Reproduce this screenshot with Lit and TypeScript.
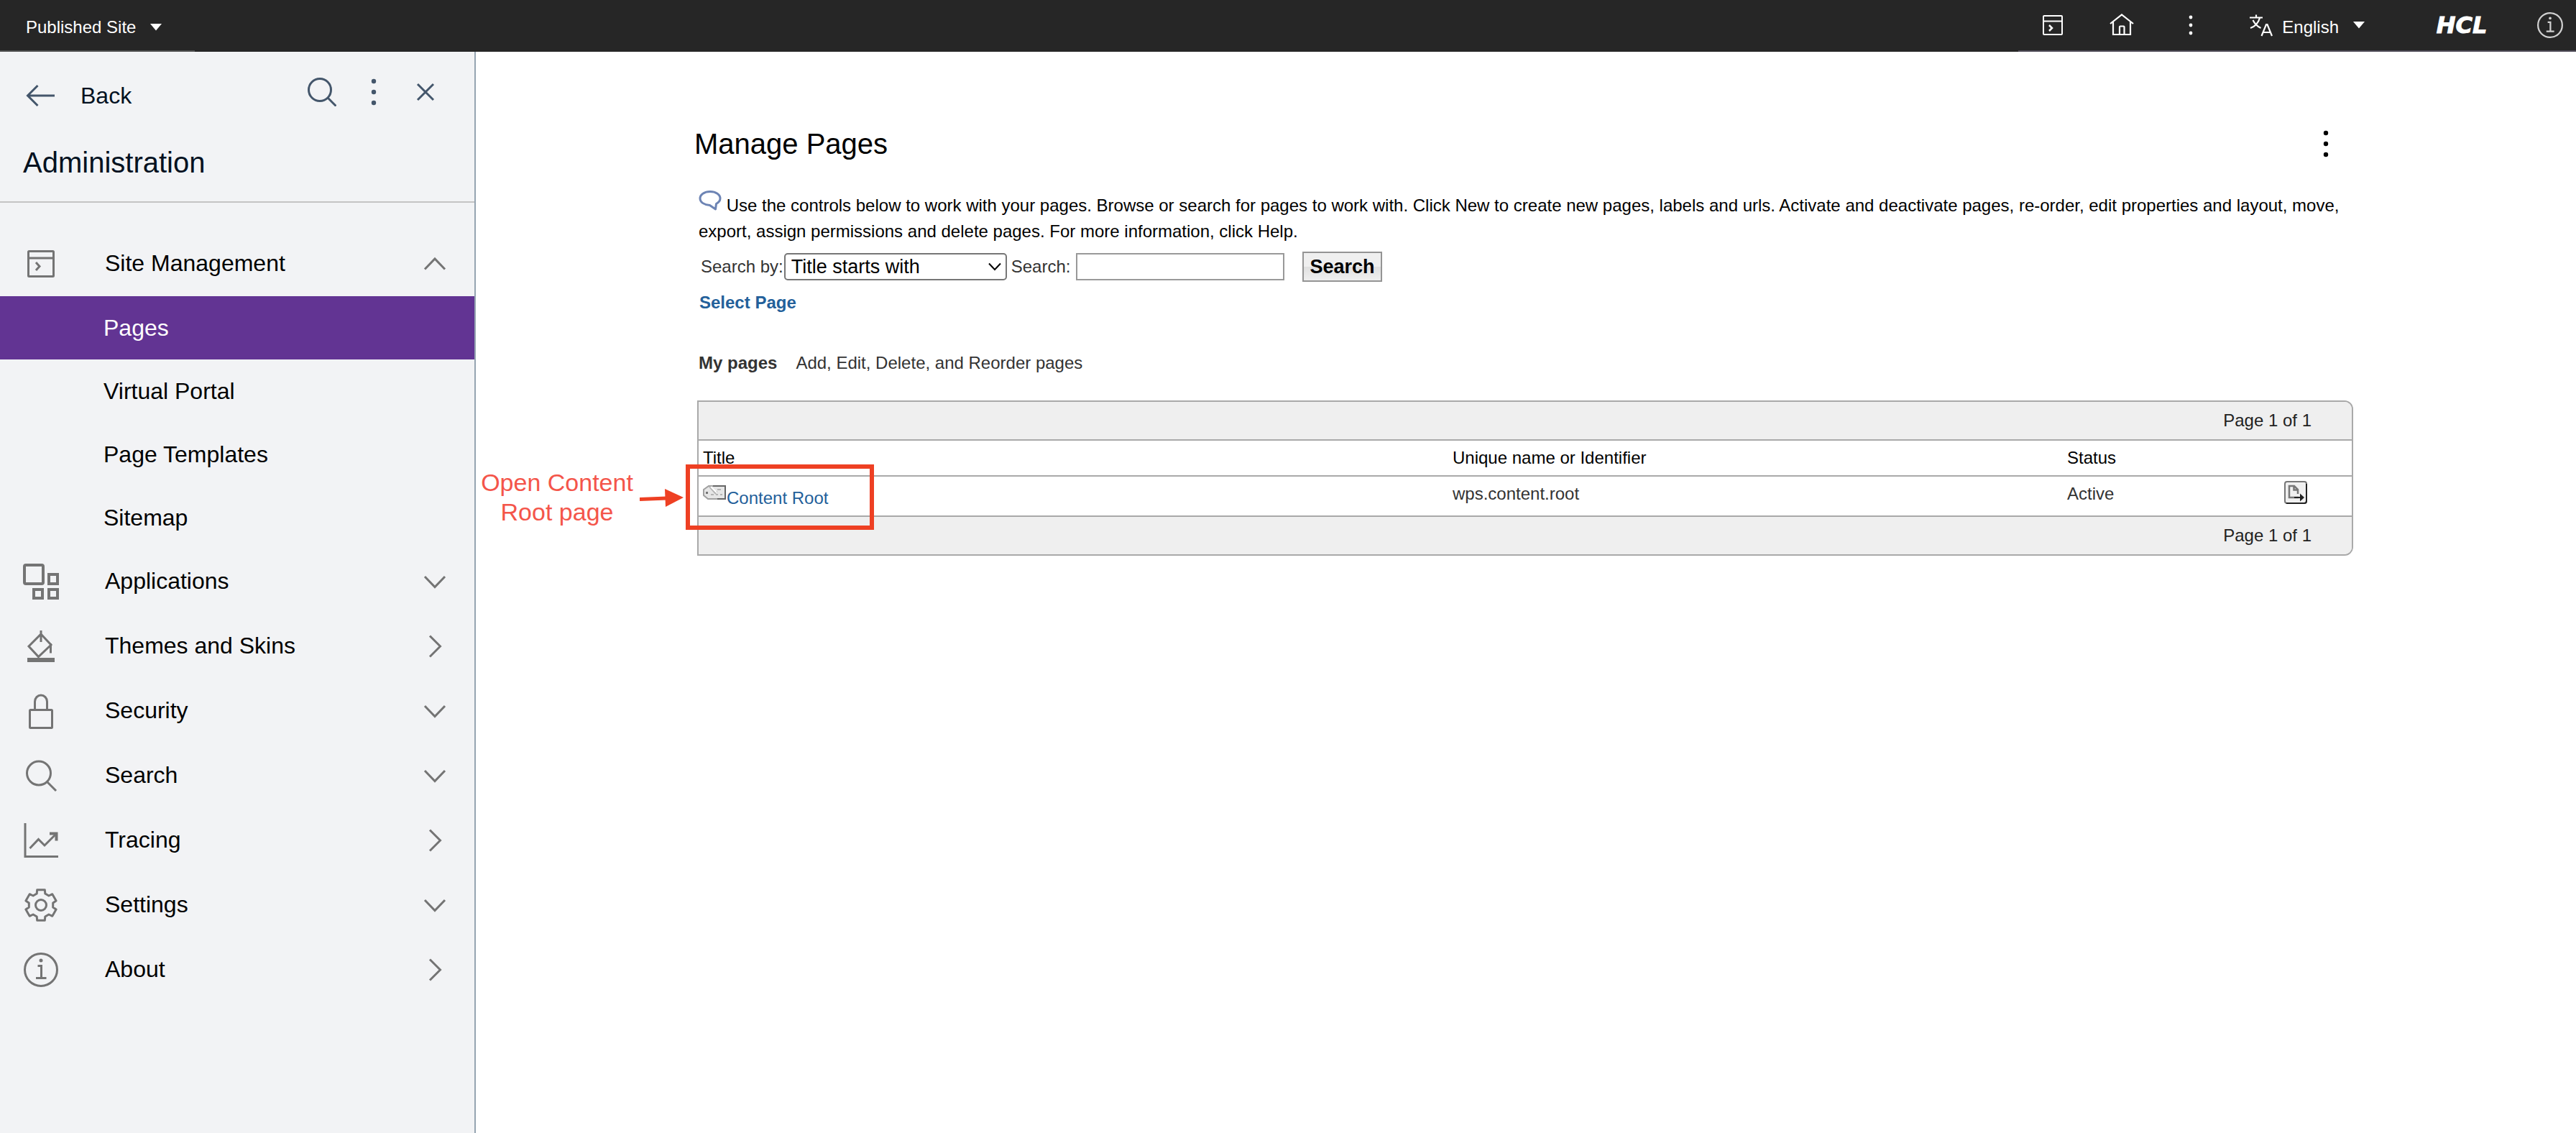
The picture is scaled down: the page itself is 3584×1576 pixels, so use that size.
import { LitElement, html, css, svg, nothing } from "lit";
import type { SVGTemplateResult } from "lit";
import { customElement, state } from "lit/decorators.js";
import { classMap } from "lit/directives/class-map.js";

interface NavSection {
  label: string;
  icon: string;
  arrow: "up" | "down" | "right";
  pages?: string[];
}

const SECTIONS: NavSection[] = [
  {
    label: "Site Management",
    icon: "site",
    arrow: "up",
    pages: ["Pages", "Virtual Portal", "Page Templates", "Sitemap"],
  },
  { label: "Applications", icon: "apps", arrow: "down" },
  { label: "Themes and Skins", icon: "paint", arrow: "right" },
  { label: "Security", icon: "lock", arrow: "down" },
  { label: "Search", icon: "search", arrow: "down" },
  { label: "Tracing", icon: "trace", arrow: "right" },
  { label: "Settings", icon: "gear", arrow: "down" },
  { label: "About", icon: "info", arrow: "right" },
];

/** Outline of a six-toothed gear centred on (24, 24). */
function gearPath(): string {
  const corners: Array<[number, number]> = [
    [-20, 17],
    [-14, 22],
    [14, 22],
    [20, 17],
  ];
  const points: string[] = [];
  for (let tooth = 0; tooth < 6; tooth++) {
    for (const [offset, radius] of corners) {
      const angle = ((tooth * 60 + offset - 90) * Math.PI) / 180;
      const x = 24 + radius * Math.cos(angle);
      const y = 24 + radius * Math.sin(angle);
      points.push(`${x.toFixed(1)} ${y.toFixed(1)}`);
    }
  }
  return `M${points.join("L")}Z`;
}

const ICONS: Record<string, SVGTemplateResult> = {
  site: svg`<g stroke-width="3"><rect x="6.500" y="6.500" width="35" height="35" rx="1"/><path d="M6 16H42M17 22l5 5.500-5 5.500"/></g>`,
  apps: svg`<g stroke-width="4"><rect x="1" y="1" width="26" height="26" rx="2"/><rect x="35" y="14" width="12" height="13"/><rect x="14" y="35" width="12" height="12"/><rect x="35" y="35" width="12" height="12"/></g>`,
  paint: svg`<path stroke-width="3" d="M24 2V18M24 7L38 22 20.500 38.500 7 24ZM37.500 20V33.500"/><path stroke-width="6" d="M5 43H43"/>`,
  lock: svg`<g stroke-width="3"><rect x="8.500" y="22.500" width="31" height="25" rx="1"/><path d="M15.500 22V11a8.500 9 0 0 1 17 0V22"/></g>`,
  search: svg`<g stroke-width="3"><circle cx="21" cy="20.500" r="16.500"/><path d="M32.500 32.500L45 45"/></g>`,
  trace: svg`<path stroke-width="3" d="M2 0V46.500H48M8.500 35L20.500 22.500 29 31 45.500 14.500"/><path stroke-width="4" stroke-linejoin="miter" d="M36 14.500H45.500V24.500"/>`,
  gear: svg`<g stroke-width="3"><path stroke-linejoin="round" d=${gearPath()}/><circle cx="24" cy="24" r="7.500"/></g>`,
  info: svg`<g stroke-width="3"><circle cx="24" cy="24" r="22.500"/><path d="M19.500 18.500H24.500V35.500M17 35.500H31.500"/></g><circle cx="24" cy="11" r="2.500" fill="currentColor" stroke="none"/>`,
};

const ARROWS: Record<string, string> = {
  up: "M1 22.500L15 8L29 22.500",
  down: "M1 8L15 22.500L29 8",
  right: "M8 0.500L22.500 15L8 29.500",
};

const dots = (radius: number, step: number) => svg`
  <circle cx="20" cy=${20 - step} r=${radius} fill="currentColor" stroke="none"/>
  <circle cx="20" cy="20" r=${radius} fill="currentColor" stroke="none"/>
  <circle cx="20" cy=${20 + step} r=${radius} fill="currentColor" stroke="none"/>`;

const reset = css`
  :host {
    display: block;
    box-sizing: border-box;
    font-family: "Liberation Sans", Arial, Helvetica, sans-serif;
  }
  * {
    box-sizing: border-box;
  }
  svg {
    display: block;
    flex: none;
    fill: none;
    stroke: currentColor;
  }
  button {
    display: flex;
    align-items: center;
    margin: 0;
    padding: 0;
    border: 0;
    background: none;
    color: inherit;
    font: inherit;
    text-align: left;
    cursor: pointer;
  }
  a {
    color: inherit;
    text-decoration: none;
  }
  h1,
  h2,
  p {
    margin: 0;
    font-weight: 400;
  }
`;

@customElement("portal-toolbar")
export class PortalToolbar extends LitElement {
  static styles = [
    reset,
    css`
      .bar {
        display: flex;
        justify-content: space-between;
        height: 72px;
        background: #262626;
        color: #fff;
        font-size: 24px;
        line-height: 28px;
      }
      .site,
      .tools {
        display: flex;
        align-items: center;
        border-bottom: 2px solid #4f4b57;
      }
      .site {
        padding: 6px 46px 0 36px;
        gap: 20px;
        border-color: #505050;
      }
      .tools {
        padding: 0 18px 0 30px;
      }
      .group {
        display: flex;
        gap: 60px;
        margin-right: 64px;
      }
      .square {
        width: 36px;
        height: 36px;
        justify-content: center;
      }
      .language {
        margin-right: 72px;
      }
      .language-name {
        padding: 6px 20px 0 13px;
      }
      .brand {
        display: flex;
        justify-content: center;
        width: 126px;
        margin-right: 42px;
        font: italic 700 32px/36px "DejaVu Sans", sans-serif;
        -webkit-text-stroke: 1px #fff;
      }
      .info {
        color: #d0d0d0;
      }
    `,
  ];

  render() {
    return html`
      <header class="bar">
        <button class="site">
          Published Site
          <svg width="16" height="10" viewBox="0 0 16 10"><path fill="#fff" stroke="none" d="M0 0H16L8 9.500Z" /></svg>
        </button>
        <div class="tools">
          <div class="group">
            <button class="square" aria-label="Site manager">
              <svg width="36" height="36" viewBox="0 0 36 36" stroke-width="2">
                <rect x="5" y="5" width="26" height="26" rx="1" />
                <path d="M5 12.500H31" /><path d="M13 18l4 4-4 4" stroke-width="2.500" />
              </svg>
            </button>
            <button class="square" aria-label="Home">
              <svg width="36" height="36" viewBox="0 0 36 36" stroke-width="2.200">
                <path d="M2 16L18 3.500L34 16M6 13.500V31H30V13.500M15 31V20.500a1 1 0 0 1 1-1H20.500a1 1 0 0 1 1 1V31" />
              </svg>
            </button>
            <button class="square" aria-label="More">
              <svg width="40" height="40" viewBox="0 0 40 40">${dots(2.4, 11)}</svg>
            </button>
          </div>
          <button class="language">
            <svg width="32" height="32" viewBox="0 0 32 32" stroke-width="2.200">
              <path d="M0 5.500H18M9 1.500V5.500M14 6C12 13 7 18 1 20M4.500 9C7 14 11 18 15.500 20" />
              <path d="M16.500 31L23 15H24.500L31 31M18.500 26H29" />
            </svg>
            <span class="language-name">English</span>
            <svg width="16" height="10" viewBox="0 0 16 10"><path fill="#fff" stroke="none" d="M0 0H16L8 9.500Z" /></svg>
          </button>
          <span class="brand">HCL</span>
          <button class="info" aria-label="Information">
            <svg width="36" height="36" viewBox="0 0 48 48">${ICONS.info}</svg>
          </button>
        </div>
      </header>
    `;
  }
}

@customElement("admin-sidebar")
export class AdminSidebar extends LitElement {
  @state() private current = "Pages";

  static styles = [
    reset,
    css`
      :host {
        flex: none;
        width: 662px;
        border-right: 2px solid #95a4b1;
        background: #f2f3f5;
        color: #000;
        font-size: 32px;
        line-height: 36px;
      }
      .head {
        padding: 36px 48px 30px 32px;
        border-bottom: 2px solid #c4c4c4;
        color: #03111f;
      }
      .row {
        display: flex;
        justify-content: space-between;
        align-items: flex-start;
        margin-bottom: 44px;
      }
      .back {
        gap: 30px;
        height: 50px;
      }
      .tools {
        display: flex;
        gap: 32px;
      }
      .row svg {
        color: #44566b;
      }
      .title {
        font-size: 40px;
        line-height: 48px;
      }
      .nav {
        padding-top: 40px;
      }
      .section {
        gap: 65px;
        width: 100%;
        height: 90px;
        padding: 0 40px 0 33px;
      }
      .section svg {
        color: #747474;
      }
      .name {
        flex: 1;
        padding-bottom: 2px;
      }
      .page {
        display: flex;
        align-items: center;
        height: 88px;
        padding-left: 144px;
      }
      .selected {
        background: #623493;
        color: #fff;
      }
    `,
  ];

  private choose(event: Event, page: string) {
    event.preventDefault();
    this.current = page;
  }

  render() {
    return html`
      <div class="head">
        <div class="row">
          <button class="back">
            <svg width="50" height="32" viewBox="0 0 50 32" stroke-width="3">
              <path d="M6 16H44M20.500 2L6.500 16L20.500 30" />
            </svg>
            Back
          </button>
          <div class="tools">
            <button aria-label="Search">
              <svg width="40" height="40" viewBox="0 0 40 40" stroke-width="3">
                <circle cx="17" cy="17" r="15.500" /><path d="M28 28L39.500 39.500" />
              </svg>
            </button>
            <button aria-label="More options">
              <svg width="40" height="40" viewBox="0 0 40 40">${dots(3.2, 15)}</svg>
            </button>
            <button aria-label="Close">
              <svg width="40" height="40" viewBox="0 0 40 40" stroke-width="3">
                <path d="M9 9L31 31M31 9L9 31" />
              </svg>
            </button>
          </div>
        </div>
        <h2 class="title">Administration</h2>
      </div>
      <nav class="nav">
        ${SECTIONS.map(
          (section) => html`
            <button class="section">
              <svg width="48" height="48" viewBox="0 0 48 48" overflow="visible">${ICONS[section.icon]}</svg>
              <span class="name">${section.label}</span>
              <svg width="30" height="30" viewBox="0 0 30 30" stroke-width="3" overflow="visible">
                <path d=${ARROWS[section.arrow]} />
              </svg>
            </button>
            ${section.pages
              ? section.pages.map(
                  (page) => html`<a
                    href="#"
                    class=${classMap({ page: true, selected: page === this.current })}
                    @click=${(event: Event) => this.choose(event, page)}
                    >${page}</a
                  >`,
                )
              : nothing}
          `,
        )}
      </nav>
    `;
  }
}

@customElement("manage-pages")
export class ManagePages extends LitElement {
  static styles = [
    reset,
    css`
      :host {
        flex: 1;
        min-width: 0;
        padding: 104px 310px 40px 304px;
        color: #333;
        font-size: 24px;
        line-height: 36px;
      }
      .heading {
        display: flex;
        justify-content: space-between;
        align-items: center;
        padding-right: 18px;
        color: #000;
      }
      .title {
        font-size: 40px;
        line-height: 48px;
      }
      .body {
        padding-left: 4px;
      }
      .intro {
        margin-top: 40px;
        padding: 0 2px;
        color: #000;
      }
      .bubble {
        display: inline-block;
        vertical-align: baseline;
      }
      .search {
        display: flex;
        align-items: center;
        height: 42px;
        margin: 10px 0 11px;
        padding-left: 5px;
      }
      .picker {
        display: grid;
        align-items: center;
        margin: 0 6px 0 1px;
      }
      .picker > * {
        grid-area: 1 / 1;
      }
      .picker svg {
        justify-self: end;
        margin-right: 8px;
        color: #000;
        pointer-events: none;
      }
      .select {
        width: 310px;
        height: 38px;
        padding: 0 8px;
        border: 2px solid #767676;
        border-radius: 5px;
        background: #fff;
        color: #000;
        font: 27px/32px "Liberation Sans", Arial, sans-serif;
        appearance: none;
      }
      .field {
        width: 290px;
        height: 38px;
        margin: 0 25px 0 8px;
        padding: 0 6px;
        border: 2px solid #999;
        background: #fff;
        font: inherit;
      }
      .go {
        height: 42px;
        padding: 0 8px;
        border: 2px solid #949494;
        background: linear-gradient(#efefef 50%, #e0e0e0 50%, #efefef);
        color: #000;
        font: 700 27px/36px "Liberation Sans", Arial, sans-serif;
      }
      .select-page {
        display: inline-block;
        margin-left: 3px;
        font-weight: 700;
      }
      .link {
        color: #23609a;
      }
      .caption {
        display: flex;
        gap: 26px;
        margin: 48px 2px 34px;
      }
      .list {
        border: 2px solid #a9a9a9;
        border-radius: 0 12px 12px 0;
      }
      .pager {
        display: flex;
        justify-content: flex-end;
        align-items: center;
        height: 52px;
        padding-right: 56px;
        background: #efefef;
        color: #222;
      }
      .pager-top {
        border-radius: 0 10px 0 0;
      }
      .pager-bottom {
        border-radius: 0 0 10px 0;
      }
      .table {
        width: 100%;
        border-collapse: separate;
        border-spacing: 0;
        table-layout: fixed;
        text-align: left;
      }
      .table th {
        height: 50px;
        padding: 0 6px;
        border-top: 2px solid #a9a9a9;
        color: #000;
        font-weight: 400;
      }
      .table td {
        height: 58px;
        padding: 6px;
        border: solid #a9a9a9;
        border-width: 2px 0;
        vertical-align: top;
      }
      .name-column {
        width: 855px;
      }
      .status-column {
        width: 302px;
      }
      .action-column {
        width: 100px;
      }
      .table .first {
        position: relative;
        padding-top: 12px;
      }
      .entry {
        display: flex;
        gap: 1px;
      }
      .frame {
        position: absolute;
        left: -18px;
        top: -17px;
        width: 262px;
        height: 91px;
        border: 6px solid #ee4023;
        pointer-events: none;
      }
      .note {
        position: absolute;
        left: -307px;
        top: -12px;
        width: 220px;
        color: #f4554a;
        font-size: 34px;
        line-height: 41px;
        text-align: center;
      }
      .arrow {
        position: absolute;
        left: -82px;
        top: 15px;
      }
    `,
  ];

  render() {
    return html`
      <div class="heading">
        <h1 class="title">Manage Pages</h1>
        <button aria-label="Page menu">
          <svg width="40" height="40" viewBox="0 0 40 40">${dots(3.2, 15)}</svg>
        </button>
      </div>
      <div class="body">
        <p class="intro">
          <svg class="bubble" width="32" height="30" viewBox="0 0 32 30">
            <path stroke="#6d84b4" stroke-width="3" stroke-linejoin="round"
              d="M24.500 19.500C28 17.500 30 15 30 12C30 6.500 24 2.500 16 2.500S2 6.500 2 12C2 17.500 8 21 15.500 21.500L23.500 27Z" />
          </svg>
          Use the controls below to work with your pages. Browse or search for pages to work with. Click New to create
          new pages, labels and urls. Activate and deactivate pages, re-order, edit properties and layout, move, export,
          assign permissions and delete pages. For more information, click Help.
        </p>
        <form class="search" @submit=${(event: Event) => event.preventDefault()}>
          <label for="criterion">Search by:</label>
          <span class="picker">
            <select class="select" id="criterion">
              <option>Title starts with</option>
            </select>
            <svg width="18" height="12" viewBox="0 0 18 12" stroke-width="2"><path d="M1 1.500L9 10L17 1.500" /></svg>
          </span>
          <label for="term">Search:</label>
          <input class="field" id="term" type="text" />
          <button class="go">Search</button>
        </form>
        <a class="link select-page" href="#">Select Page</a>
        <div class="caption"><strong>My pages</strong><span>Add, Edit, Delete, and Reorder pages</span></div>
        <div class="list">
          <div class="pager pager-top">Page 1 of 1</div>
          <table class="table">
            <thead>
              <tr>
                <th>Title</th>
                <th class="name-column">Unique name or Identifier</th>
                <th class="status-column">Status</th>
                <th class="action-column" aria-label="Actions"></th>
              </tr>
            </thead>
            <tbody>
              <tr>
                <td class="first">
                  <div class="entry">
                    <svg width="32" height="20" viewBox="0 0 32 20">
                      <path fill="#e6e6e6" stroke="#a0a0a0" stroke-width="2" d="M8 1H31V19H7L1 14V6Z" />
                      <path stroke="#666" stroke-width="2" d="M14 1H31V19H20" />
                      <path stroke="#b4b4b4" stroke-width="2" d="M9 2L18 12M20 6h5M17 9h3M11 13h4M18 13h3M24 13h3" />
                      <path stroke="#fff" stroke-width="2" d="M11 2L19 10" />
                      <rect x="4" y="9" width="3" height="3" fill="#777" stroke="none" />
                    </svg>
                    <a class="link" href="#">Content Root</a>
                  </div>
                  <div class="frame"></div>
                  <div class="note">Open Content Root page</div>
                  <svg class="arrow" width="62" height="30" viewBox="0 0 62 30">
                    <path stroke="#ee4023" stroke-width="5" d="M0 16.500L38 15" />
                    <path fill="#ee4023" stroke="none" d="M35 2L61 14L36 27Z" />
                  </svg>
                </td>
                <td>wps.content.root</td>
                <td>Active</td>
                <td>
                  <button aria-label="Open page actions">
                    <svg width="32" height="32" viewBox="0 0 32 32">
                      <rect x="1" y="1" width="30" height="30" rx="3" fill="#f0f0f0" stroke="#777" stroke-width="2" />
                      <path stroke="#222" stroke-width="2" d="M3 31H28a3 3 0 0 0 3-3V4" />
                      <path stroke="#777" stroke-width="2.500" d="M20 23H7V7H14L19 12V18M13.500 7V12.500H19" />
                      <path stroke="#222" stroke-width="2" d="M14 23H24" />
                      <path fill="#222" stroke="none" d="M22 17.500L28 23L22 28.500Z" />
                    </svg>
                  </button>
                </td>
              </tr>
            </tbody>
          </table>
          <div class="pager pager-bottom">Page 1 of 1</div>
        </div>
      </div>
    `;
  }
}

@customElement("app-root")
export class AppRoot extends LitElement {
  static styles = css`
    :host {
      display: flex;
      flex-direction: column;
      min-height: 100vh;
      background: #fff;
    }
    .content {
      display: flex;
      flex: 1;
    }
  `;

  render() {
    return html`
      <portal-toolbar></portal-toolbar>
      <div class="content">
        <admin-sidebar></admin-sidebar>
        <manage-pages></manage-pages>
      </div>
    `;
  }
}
